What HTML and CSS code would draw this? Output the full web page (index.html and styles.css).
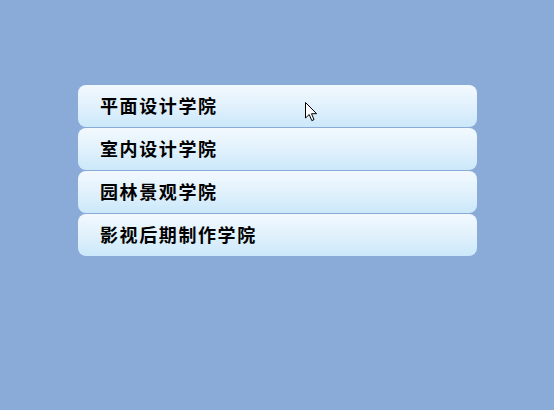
FILE: index.html
```html
<!DOCTYPE html>
<html lang="zh">
<head>
<meta charset="utf-8">
<link rel="stylesheet" href="styles.css">
</head>
<body>
<ul class="menu">
  <li class="item">平面设计学院</li>
  <li class="item">室内设计学院</li>
  <li class="item">园林景观学院</li>
  <li class="item">影视后期制作学院</li>
</ul>
<svg class="cursor" width="13" height="20" viewBox="0 0 13 20">
  <path d="M0.5 0.5 L0.5 16 L4.2 12.5 L6.8 18.6 L9 17.6 L6.5 11.7 L11.6 11.7 Z" fill="#fff" stroke="#000" stroke-width="1" stroke-linejoin="miter"/>
</svg>
</body>
</html>
```
FILE: styles.css
```css
html, body {
  margin: 0;
  padding: 0;
  background: #8aabd8;
  height: 100%;
}
body {
  position: relative;
  overflow: hidden;
}
.menu {
  list-style: none;
  margin: 85px 0 0 78px;
  padding: 0;
  width: 399px;
  display: flex;
  flex-direction: column;
  gap: 1px;
}
.item {
  height: 42px;
  box-sizing: border-box;
  border-radius: 8px;
  background: linear-gradient(to bottom, #f2f9fe 0%, #e1f1fc 50%, #cbe8fa 100%);
  display: flex;
  align-items: center;
  padding-left: 22px;
  padding-bottom: 3px;
  font-family: "Noto Sans CJK SC", sans-serif;
  font-weight: bold;
  font-size: 18px;
  letter-spacing: 1.6px;
  color: #000;
}
.cursor {
  position: absolute;
  left: 305px;
  top: 102px;
}
```
